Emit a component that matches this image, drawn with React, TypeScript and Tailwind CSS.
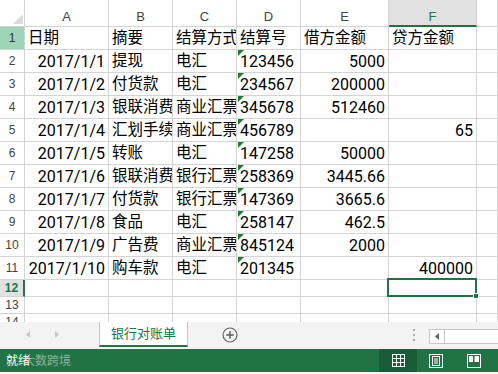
import React from "react";

type Row = { a: string; b: string; c: string; d: string; e: string; f: string };

const rows: Row[] = [
  { a: "日期", b: "摘要", c: "结算方式", d: "结算号", e: "借方金额", f: "贷方金额" },
  { a: "2017/1/1", b: "提现", c: "电汇", d: "123456", e: "5000", f: "" },
  { a: "2017/1/2", b: "付货款", c: "电汇", d: "234567", e: "200000", f: "" },
  { a: "2017/1/3", b: "银联消费", c: "商业汇票", d: "345678", e: "512460", f: "" },
  { a: "2017/1/4", b: "汇划手续费", c: "商业汇票", d: "456789", e: "", f: "65" },
  { a: "2017/1/5", b: "转账", c: "电汇", d: "147258", e: "50000", f: "" },
  { a: "2017/1/6", b: "银联消费", c: "银行汇票", d: "258369", e: "3445.66", f: "" },
  { a: "2017/1/7", b: "付货款", c: "银行汇票", d: "147369", e: "3665.6", f: "" },
  { a: "2017/1/8", b: "食品", c: "电汇", d: "258147", e: "462.5", f: "" },
  { a: "2017/1/9", b: "广告费", c: "商业汇票", d: "845124", e: "2000", f: "" },
  { a: "2017/1/10", b: "购车款", c: "电汇", d: "201345", e: "", f: "400000" },
];

const font = { fontFamily: '"Liberation Sans", "Noto Sans CJK SC", sans-serif' };
const dataFont = { fontFamily: 'Roboto, "Noto Sans CJK SC", sans-serif' };

function Cell({
  text,
  right,
  marker,
  num,
}: {
  text?: string;
  right?: boolean;
  marker?: boolean;
  num?: boolean;
}) {
  return (
    <div
      className={`relative flex items-center overflow-hidden whitespace-nowrap border-r border-b border-[#d4d4d4] px-[3px] leading-none text-black ${
        num ? "text-[16px]" : "text-[15.5px]"
      } ${right ? "justify-end" : "justify-start"}`}
      style={dataFont}
    >
      {marker && (
        <svg className="absolute left-[1px] top-0" width="6" height="6" viewBox="0 0 6 6">
          <polygon points="0,0 6,0 0,6" fill="#1e7b34" />
        </svg>
      )}
      {text ? <span className="shrink-0 pt-[1px]">{text}</span> : null}
    </div>
  );
}

function ColHead({ label, active }: { label: string; active?: boolean }) {
  return (
    <div
      className={
        active
          ? "flex items-end justify-center border-r border-r-[#d4d4d4] border-b-2 border-b-[#217346] bg-[#e1e1e1] pb-0 text-[13px] leading-none text-[#217346]"
          : "flex items-end justify-center border-r border-b border-[#d4d4d4] bg-white pb-[1px] text-[13px] leading-none text-[#444]"
      }
    >
      <span className="pb-[2px]">{label}</span>
    </div>
  );
}

function RowHead({ n, variant }: { n: number; variant?: "green" | "active" }) {
  if (variant === "active") {
    return (
      <div className="flex items-center justify-center border-r-2 border-r-[#217346] border-b border-b-[#d4d4d4] bg-[#e1e1e1] text-[12px] font-bold leading-none text-[#217346]">
        {n}
      </div>
    );
  }
  return (
    <div
      className={`flex items-center justify-center border-r border-b border-[#d4d4d4] text-[12px] leading-none ${
        variant === "green" ? "bg-[#9fd5b7] text-[#333]" : "bg-white text-[#444]"
      }`}
    >
      {n}
    </div>
  );
}

function Empty() {
  return <div className="border-r border-b border-[#d4d4d4]" />;
}

function GridIcon() {
  return (
    <svg width="13" height="13" viewBox="0 0 13 13" fill="none" stroke="white" strokeWidth="1">
      <rect x="0.5" y="0.5" width="12" height="12" />
      <line x1="4.5" y1="0.5" x2="4.5" y2="12.5" />
      <line x1="8.5" y1="0.5" x2="8.5" y2="12.5" />
      <line x1="0.5" y1="4.5" x2="12.5" y2="4.5" />
      <line x1="0.5" y1="8.5" x2="12.5" y2="8.5" />
    </svg>
  );
}

function PageLayoutIcon() {
  return (
    <svg width="14" height="14" viewBox="0 0 14 14" fill="none" stroke="white" strokeWidth="1">
      <rect x="0.5" y="0.5" width="13" height="13" />
      <rect x="3.5" y="2.5" width="7" height="9" />
      <line x1="5" y1="5" x2="9" y2="5" />
      <line x1="5" y1="7" x2="9" y2="7" />
      <line x1="5" y1="9" x2="9" y2="9" />
    </svg>
  );
}

function PageBreakIcon() {
  return (
    <svg width="14" height="14" viewBox="0 0 14 14" fill="none">
      <rect x="0.5" y="0.5" width="13" height="13" stroke="white" strokeWidth="1" />
      <rect x="2" y="2" width="4" height="6" fill="white" />
      <rect x="7.5" y="2" width="4.5" height="6" fill="white" />
    </svg>
  );
}

export default function App() {
  return (
    <div className="h-[374px] w-[498px] overflow-hidden bg-white" style={font}>
      {/* Sheet */}
      <div className="h-[322px] overflow-hidden">
        <div className="grid grid-cols-[25px_84px_64px_64px_64px_88px_88px_1fr] grid-rows-[27px_repeat(11,23px)_17px_17px_17px]">
          {/* header row */}
          <div className="flex items-end justify-end border-r border-b border-[#d4d4d4] pb-[2px] pr-[1px]">
            <svg width="10" height="10" viewBox="0 0 10 10">
              <polygon points="10,0 10,10 0,10" fill="#dadada" />
            </svg>
          </div>
          <ColHead label="A" />
          <ColHead label="B" />
          <ColHead label="C" />
          <ColHead label="D" />
          <ColHead label="E" />
          <ColHead label="F" active />
          <ColHead label="" />

          {rows.map((r, i) => {
            const n = i + 1;
            const header = i === 0;
            return (
              <React.Fragment key={n}>
                <RowHead n={n} variant={n === 1 ? "green" : undefined} />
                <Cell text={r.a} right={!header} num={!header} />
                <Cell text={r.b} />
                <Cell text={r.c} />
                <Cell text={r.d} marker={!header} num={!header} />
                <Cell text={r.e} right={!header} num={!header} />
                <Cell text={r.f} right={!header} num={!header} />
                <Empty />
              </React.Fragment>
            );
          })}

          {/* row 12 */}
          <RowHead n={12} variant="active" />
          <Empty />
          <Empty />
          <Empty />
          <Empty />
          <Empty />
          <div className="relative border-r border-b border-[#d4d4d4]">
            <div className="absolute -left-[2px] -top-[2px] -right-[1px] -bottom-[1px] z-10 border-2 border-[#217346]" />
            <div className="absolute -right-[3px] -bottom-[3px] z-20 h-[6px] w-[6px] border border-white bg-[#217346]" />
          </div>
          <Empty />

          {/* row 13 */}
          <RowHead n={13} />
          <Empty />
          <Empty />
          <Empty />
          <Empty />
          <Empty />
          <Empty />
          <Empty />

          {/* row 14 */}
          <div className="flex items-start justify-center border-r border-b border-[#d4d4d4] pt-[2px] text-[12px] leading-none text-[#444]">
            14
          </div>
          <Empty />
          <Empty />
          <Empty />
          <Empty />
          <Empty />
          <Empty />
          <Empty />
        </div>
      </div>

      {/* Tab bar */}
      <div className="flex h-[27px] items-start bg-[#f3f3f3]">
        <div className="flex h-[25px] w-[99px] items-center gap-[25px] pl-[26px]">
          <svg width="4" height="7" viewBox="0 0 4 7">
            <polygon points="4,0 4,7 0,3.5" fill="#c3c3c3" />
          </svg>
          <svg width="4" height="7" viewBox="0 0 4 7">
            <polygon points="0,0 0,7 4,3.5" fill="#c3c3c3" />
          </svg>
        </div>
        <div className="flex h-[25px] w-[89px] items-center justify-center border-x border-[#c6c6c6] border-b-2 border-b-[#217346] bg-white text-[13px] leading-none text-[#217346]">
          银行对账单
        </div>
        <div className="ml-[34px] flex h-[25px] items-center">
          <svg width="16" height="16" viewBox="0 0 16 16" fill="none" stroke="#666" strokeWidth="1.2">
            <circle cx="8" cy="8" r="7" />
            <line x1="8" y1="4.2" x2="8" y2="11.8" strokeWidth="1.6" />
            <line x1="4.2" y1="8" x2="11.8" y2="8" strokeWidth="1.6" />
          </svg>
        </div>
        <div className="flex-1" />
        <div className="mr-[14px] flex h-[25px] w-[3px] flex-col items-center justify-center gap-[3px]">
          <div className="h-[2px] w-[2px] bg-[#a8a8a8]" />
          <div className="h-[2px] w-[2px] bg-[#a8a8a8]" />
          <div className="h-[2px] w-[2px] bg-[#a8a8a8]" />
        </div>
        <div className="mt-[7px] flex h-[15px] w-[69px] border border-r-0 border-[#c6c6c6] bg-white">
          <div className="flex w-[15px] items-center justify-center border-r border-[#c6c6c6]">
            <svg width="4" height="7" viewBox="0 0 4 7">
              <polygon points="4,0 4,7 0,3.5" fill="#606060" />
            </svg>
          </div>
          <div className="flex-1" />
        </div>
      </div>

      {/* Status bar */}
      <div className="relative flex h-[23px] items-center bg-[#217346]">
        <span className="pl-[6px] text-[12px] leading-none text-white">就绪</span>
        <span className="pointer-events-none absolute left-[23px] top-[6px] text-[12px] leading-none text-[#d3dcd6] opacity-60">
          大数跨境
        </span>
        <div className="flex-1" />
        <div className="flex h-full items-center pr-[5px]">
          <div className="flex h-full w-[38px] items-center justify-center bg-[#1a5c37]">
            <GridIcon />
          </div>
          <div className="flex h-full w-[38px] items-center justify-center">
            <PageLayoutIcon />
          </div>
          <div className="flex h-full w-[38px] items-center justify-center">
            <PageBreakIcon />
          </div>
        </div>
      </div>
      <div className="h-[2px] bg-white" />
    </div>
  );
}
